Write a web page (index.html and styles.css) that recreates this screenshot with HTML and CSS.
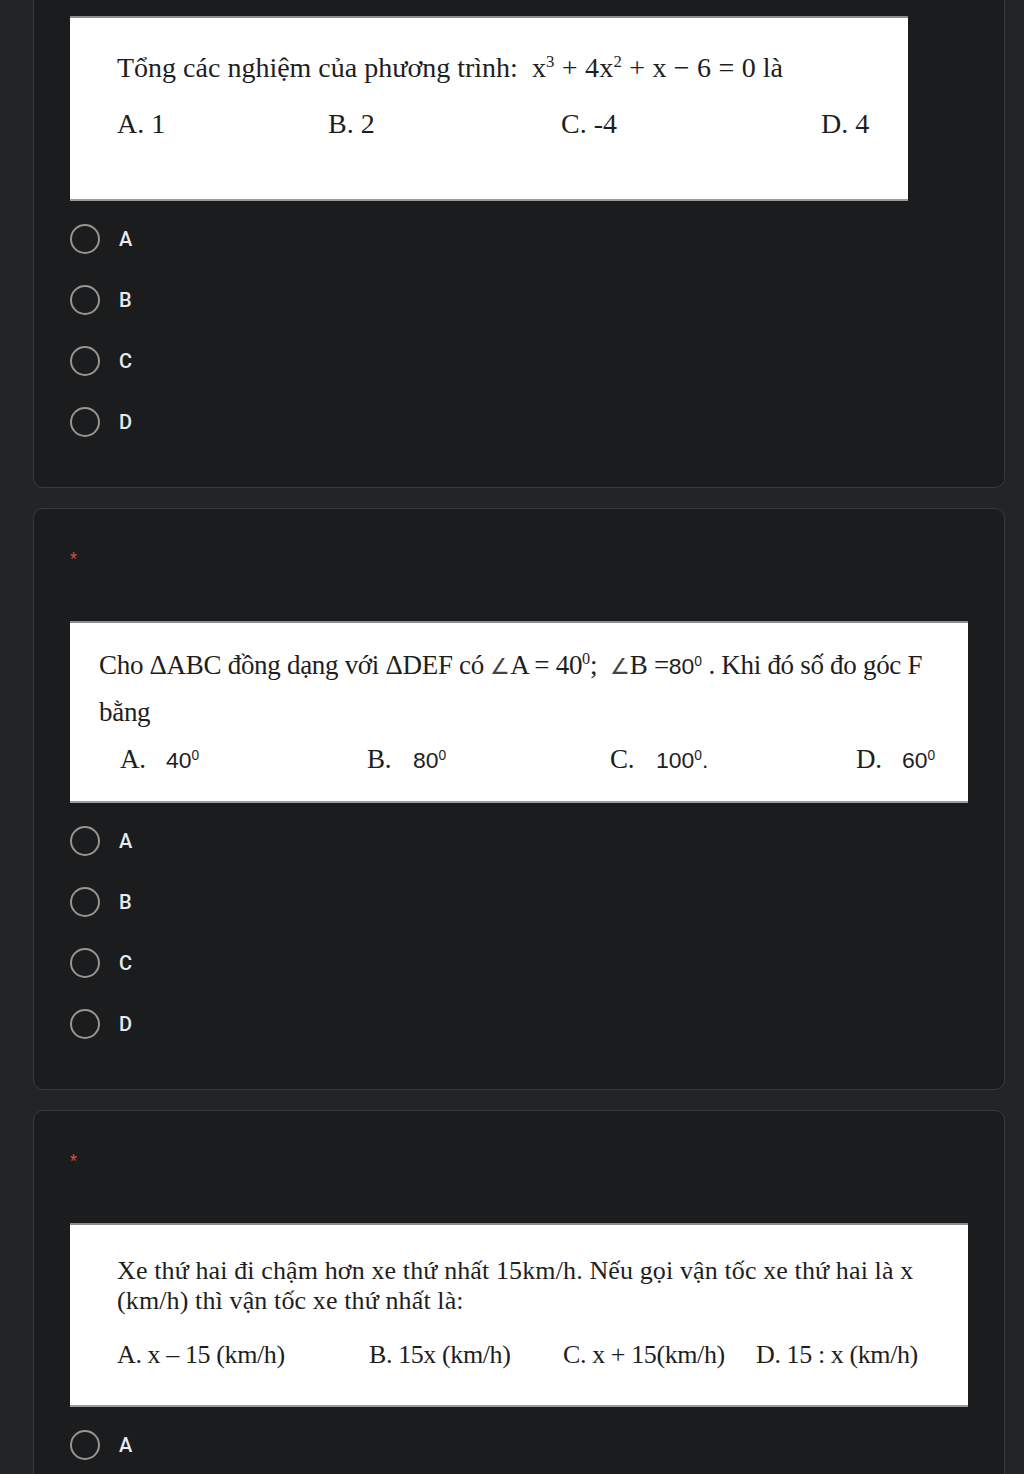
FILE: index.html
```html
<!DOCTYPE html>
<html lang="vi">
<head>
<meta charset="utf-8">
<title>Form</title>
<link rel="stylesheet" href="styles.css">
</head>
<body>
<div class="page">
  <section class="card card-first">
    <div class="qimg qimg-1">
      <p class="q1-title">Tổng các nghiệm của phương trình:&nbsp; <span class="math">x<sup>3</sup> + 4x<sup>2</sup> + x − 6 = 0</span> là</p>
      <div class="opts opts-1"><span>A. 1</span><span>B. 2</span><span>C. -4</span><span>D. 4</span></div>
    </div>
    <ul class="choices">
      <li><span class="radio"></span><span class="lbl">A</span></li>
      <li><span class="radio"></span><span class="lbl">B</span></li>
      <li><span class="radio"></span><span class="lbl">C</span></li>
      <li><span class="radio"></span><span class="lbl">D</span></li>
    </ul>
  </section>

  <section class="card">
    <div class="req">*</div>
    <div class="qimg qimg-2">
      <p class="q2-text">Cho ΔABC đồng dạng với ΔDEF có <span class="ang">∠</span>A = 40<sup>0</sup>;&nbsp; <span class="ang">∠</span>B =<span class="sans">80<sup>0</sup></span> . Khi đó số đo góc F<br>bằng</p>
      <div class="opts opts-2">
        <span><i class="key">A.</i><b class="sans">40<sup>0</sup></b></span>
        <span><i class="key">B.</i><b class="sans">80<sup>0</sup></b></span>
        <span><i class="key">C.</i><b class="sans">100<sup>0</sup>.</b></span>
        <span><i class="key">D.</i><b class="sans">60<sup>0</sup></b></span>
      </div>
    </div>
    <ul class="choices">
      <li><span class="radio"></span><span class="lbl">A</span></li>
      <li><span class="radio"></span><span class="lbl">B</span></li>
      <li><span class="radio"></span><span class="lbl">C</span></li>
      <li><span class="radio"></span><span class="lbl">D</span></li>
    </ul>
  </section>

  <section class="card card-last">
    <div class="req">*</div>
    <div class="qimg qimg-3">
      <p class="q3-text">Xe thứ hai đi chậm hơn xe thứ nhất 15km/h. Nếu gọi vận tốc xe thứ hai là x<br>(km/h) thì vận tốc xe thứ nhất là:</p>
      <div class="opts opts-3"><span>A. x – 15 (km/h)</span><span>B. 15x (km/h)</span><span>C. x + 15(km/h)</span><span>D. 15 : x (km/h)</span></div>
    </div>
    <ul class="choices">
      <li><span class="radio"></span><span class="lbl">A</span></li>
    </ul>
  </section>
</div>
</body>
</html>
```
FILE: styles.css
```css
html, body {
  margin: 0;
  padding: 0;
  background: #232427;
  overflow: hidden;
}
body {
  height: 1474px;
  font-family: Roboto, "Liberation Sans", sans-serif;
}
.page {
  padding: 0 19px 0 33px;
}
.card {
  background: #1b1c1e;
  border: 1px solid #393a3d;
  border-radius: 10px;
  padding: 0 36px 0 36px;
  margin-bottom: 20px;
}
.card-first {
  margin-top: -40px;
  padding-top: 55px;
  border-top-left-radius: 0;
  border-top-right-radius: 0;
}
.card-last {
  padding-bottom: 120px;
}
.req {
  padding-top: 40px;
  height: 20px;
  line-height: 20px;
  margin-bottom: 52px;
  color: #d5473f;
  font-size: 16px;
}
.qimg {
  background: #ffffff;
  color: #1e1e1e;
  font-family: "Liberation Serif", "Times New Roman", serif;
  box-sizing: border-box;
  border-top: 2px solid #8c8c8c;
  border-bottom: 2px solid #9c9c9c;
}
.qimg p { margin: 0; }
.qimg sup {
  font-size: 0.6em;
  line-height: 0;
  vertical-align: 0.6em;
}
.qimg-1 {
  width: 838px;
  height: 185px;
  padding: 32px 0 0 47px;
  font-size: 28px;
}
.q1-title { line-height: 36px; white-space: nowrap; }
.math { letter-spacing: 0.2px; }
.opts {
  display: grid;
  white-space: nowrap;
}
.opts-1 {
  margin-top: 20px;
  line-height: 36px;
  grid-template-columns: 211px 233px 260px auto;
}
.qimg-2 {
  height: 182px;
  padding: 20px 29px 0;
  font-size: 27px;
  letter-spacing: -0.3px;
}
.q2-text { line-height: 45px; }
.ang { font-size: 0.8em; color: #444; }
.sans {
  font-family: "Liberation Sans", Arial, sans-serif;
  font-weight: normal;
  font-size: 0.85em;
  letter-spacing: 0;
}
.opts-2 {
  margin-top: 2px;
  padding-left: 21px;
  line-height: 45px;
  grid-template-columns: 247px 243px 246px auto;
}
.key {
  font-style: normal;
  display: inline-block;
  width: 46px;
}
.qimg-3 {
  height: 184px;
  padding: 31px 0 0 47px;
  font-size: 26px;
}
.q3-text { line-height: 30px; white-space: nowrap; letter-spacing: 0.12px; }
.opts-3 {
  margin-top: 24px;
  line-height: 30px;
  letter-spacing: -0.4px;
  grid-template-columns: 252px 194px 193px auto;
}
.choices {
  list-style: none;
  margin: 0;
  padding: 7px 0 35px;
}
.choices li {
  height: 61px;
  display: flex;
  align-items: center;
  gap: 19px;
}
.radio {
  width: 30px;
  height: 30px;
  box-sizing: border-box;
  border: 2.5px solid #99958e;
  border-radius: 50%;
  flex: none;
}
.lbl {
  color: #e8eaed;
  font-size: 20px;
  font-weight: 500;
}
```
